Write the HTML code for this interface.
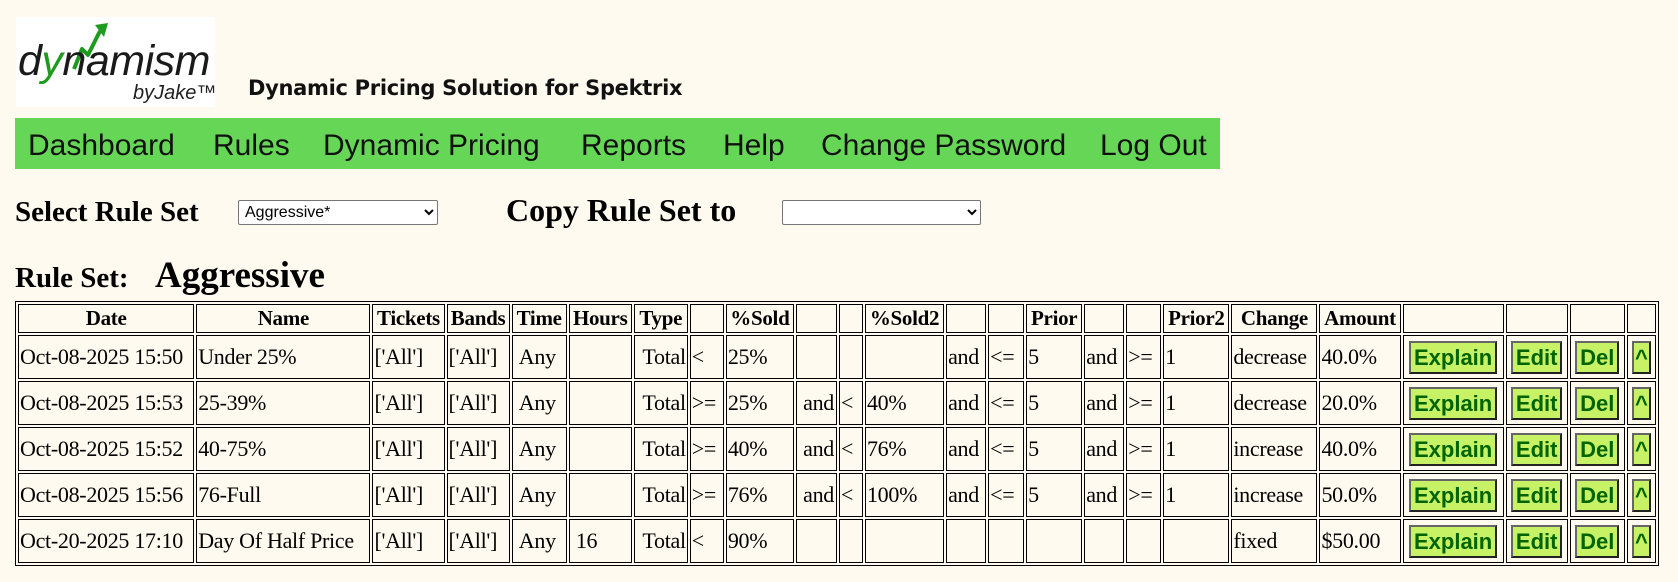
<!DOCTYPE html>
<html><head><meta charset="utf-8">
<style>
html,body{margin:0;padding:0;background:#fffaf0;width:1678px;height:582px;overflow:hidden;}
body{font-family:"Liberation Serif",serif;color:#000;position:relative;}
.abs{position:absolute;white-space:nowrap;}
.logo{left:16px;top:17px;width:199px;height:90px;background:#fff;}
.nav{left:15px;top:118px;width:1205px;height:51px;background:#66d656;}
.nav span{position:absolute;top:11px;font-family:"Liberation Sans",sans-serif;font-size:30px;color:#111;}
select{font-family:"Liberation Sans",sans-serif;font-size:16px;height:25px;background:#fff;border:1px solid #767676;border-radius:2px;padding:0 2px;}
table{position:absolute;left:15px;top:301px;border:1px solid #000;border-spacing:2px;table-layout:fixed;width:1644px;}
td,th{border:1px solid #000;box-sizing:border-box;padding:1px 1px;font-size:22px;white-space:nowrap;overflow:hidden;letter-spacing:-0.3px;}
th{height:29px;font-size:21px;padding:0 1px;}
td{height:44px;}
.b{font-family:"Liberation Sans",sans-serif;font-weight:bold;font-size:22px;color:#006400;background:#c8f266;border:2px solid #444;border-color:#666 #222 #222 #666;padding:2px 3px;line-height:25px;display:inline-block;letter-spacing:0;}
td.c{text-align:center;padding:1px;}
.r{text-align:right;}
</style></head><body>
<div class="abs logo">
<svg width="199" height="90" viewBox="0 0 199 90">
<polyline points="58,52 66,32 72,38 84,14" fill="none" stroke="#1e9a1e" stroke-width="4" stroke-linejoin="round"/>
<polygon points="79,8 92,6 88,20" fill="#1e9a1e"/>
<text x="2" y="58" font-family="Liberation Sans,sans-serif" font-size="43" fill="#1a1a1a" font-style="italic" letter-spacing="-0.5" textLength="192">d<tspan fill="#1e9a1e">y</tspan>namism</text>
<text x="117" y="82" font-family="Liberation Sans,sans-serif" font-size="20" fill="#222" font-style="italic">byJake™</text>
</svg>
</div>
<div class="abs" style="left:248px;top:76px;font-family:'DejaVu Sans','Liberation Sans',sans-serif;font-size:21px;font-weight:600;color:#111;letter-spacing:-0.3px;">Dynamic Pricing Solution for Spektrix</div>
<div class="abs nav">
<span style="left:13px">Dashboard</span><span style="left:198px">Rules</span><span style="left:308px">Dynamic Pricing</span><span style="left:566px">Reports</span><span style="left:708px">Help</span><span style="left:806px">Change Password</span><span style="left:1085px">Log Out</span>
</div>
<div class="abs" style="left:15px;top:196px;font-size:29px;font-weight:bold;">Select Rule Set</div>
<select class="abs" style="left:238px;top:200px;width:200px;"><option>Aggressive*</option></select>
<div class="abs" style="left:506px;top:192px;font-size:32px;font-weight:bold;">Copy Rule Set to</div>
<select class="abs" style="left:782px;top:200px;width:199px;"><option></option></select>
<div class="abs" style="left:15px;top:262px;font-size:29px;font-weight:bold;">Rule Set:</div>
<div class="abs" style="left:155px;top:254px;font-size:37px;font-weight:bold;">Aggressive</div>
<table>
<tr>
<th style="width:176px">Date</th><th style="width:174px">Name</th><th style="width:72px">Tickets</th><th style="width:63px">Bands</th><th style="width:55px">Time</th><th style="width:63px">Hours</th><th style="width:54px">Type</th><th style="width:34px"></th><th style="width:68px">%Sold</th><th style="width:41px"></th><th style="width:24px"></th><th style="width:79px">%Sold2</th><th style="width:40px"></th><th style="width:36px"></th><th style="width:56px">Prior</th><th style="width:40px"></th><th style="width:35px"></th><th style="width:66px">Prior2</th><th style="width:86px">Change</th><th style="width:81px">Amount</th><th style="width:101px"></th><th style="width:62px"></th><th style="width:55px"></th><th style="width:29px"></th>
</tr>
<tr><td>Oct-08-2025 15:50</td><td>Under 25%</td><td>['All']</td><td>['All']</td><td>&nbsp;Any</td><td></td><td class="r">Total</td><td>&lt;</td><td>25%</td><td></td><td></td><td></td><td>and</td><td>&lt;=</td><td>5</td><td>and</td><td>&gt;=</td><td>1</td><td>decrease</td><td>40.0%</td><td class="c"><span class="b">Explain</span></td><td class="c"><span class="b">Edit</span></td><td class="c"><span class="b">Del</span></td><td class="c"><span class="b" style="padding:2px 1px">^</span></td></tr>
<tr><td>Oct-08-2025 15:53</td><td>25-39%</td><td>['All']</td><td>['All']</td><td>&nbsp;Any</td><td></td><td class="r">Total</td><td>&gt;=</td><td>25%</td><td>&nbsp;and</td><td>&lt;</td><td>40%</td><td>and</td><td>&lt;=</td><td>5</td><td>and</td><td>&gt;=</td><td>1</td><td>decrease</td><td>20.0%</td><td class="c"><span class="b">Explain</span></td><td class="c"><span class="b">Edit</span></td><td class="c"><span class="b">Del</span></td><td class="c"><span class="b" style="padding:2px 1px">^</span></td></tr>
<tr><td>Oct-08-2025 15:52</td><td>40-75%</td><td>['All']</td><td>['All']</td><td>&nbsp;Any</td><td></td><td class="r">Total</td><td>&gt;=</td><td>40%</td><td>&nbsp;and</td><td>&lt;</td><td>76%</td><td>and</td><td>&lt;=</td><td>5</td><td>and</td><td>&gt;=</td><td>1</td><td>increase</td><td>40.0%</td><td class="c"><span class="b">Explain</span></td><td class="c"><span class="b">Edit</span></td><td class="c"><span class="b">Del</span></td><td class="c"><span class="b" style="padding:2px 1px">^</span></td></tr>
<tr><td>Oct-08-2025 15:56</td><td>76-Full</td><td>['All']</td><td>['All']</td><td>&nbsp;Any</td><td></td><td class="r">Total</td><td>&gt;=</td><td>76%</td><td>&nbsp;and</td><td>&lt;</td><td>100%</td><td>and</td><td>&lt;=</td><td>5</td><td>and</td><td>&gt;=</td><td>1</td><td>increase</td><td>50.0%</td><td class="c"><span class="b">Explain</span></td><td class="c"><span class="b">Edit</span></td><td class="c"><span class="b">Del</span></td><td class="c"><span class="b" style="padding:2px 1px">^</span></td></tr>
<tr><td>Oct-20-2025 17:10</td><td>Day Of Half Price</td><td>['All']</td><td>['All']</td><td>&nbsp;Any</td><td>&nbsp;16</td><td class="r">Total</td><td>&lt;</td><td>90%</td><td></td><td></td><td></td><td></td><td></td><td></td><td></td><td></td><td></td><td>fixed</td><td>$50.00</td><td class="c"><span class="b">Explain</span></td><td class="c"><span class="b">Edit</span></td><td class="c"><span class="b">Del</span></td><td class="c"><span class="b" style="padding:2px 1px">^</span></td></tr>
</table>
</body></html>
